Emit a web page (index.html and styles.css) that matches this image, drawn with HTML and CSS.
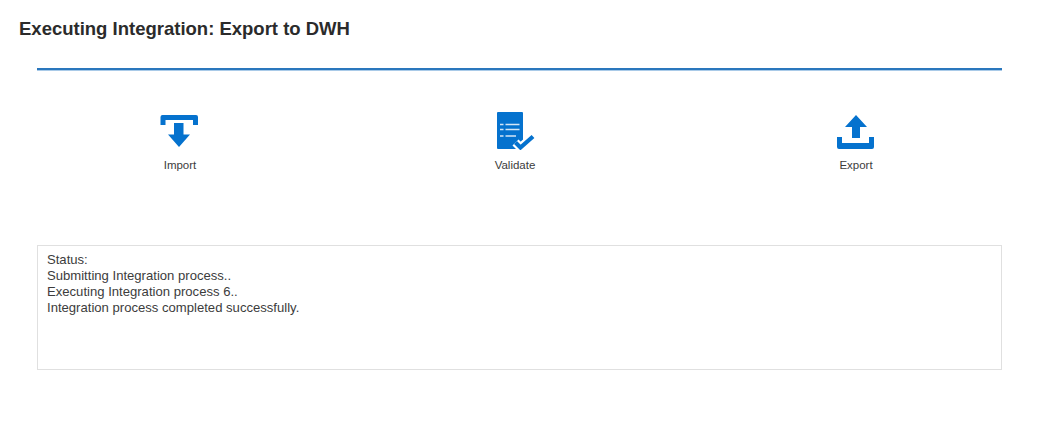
FILE: index.html
```html
<!DOCTYPE html>
<html lang="en">
<head>
<meta charset="utf-8">
<title>Executing Integration</title>
<link rel="stylesheet" href="styles.css">
</head>
<body>
<h1 class="title">Executing Integration: Export to DWH</h1>
<main class="content">
  <div class="steps">
    <div class="step step-import">
      <svg class="icon" width="40" height="38" viewBox="0 0 40 38" aria-hidden="true">
        <path fill="#0572ce" d="M0.500 5a2 2 0 0 1 2-2h33.500a2 2 0 0 1 2 2v8h-5v-5h-27.500v5h-5z"/>
        <path fill="#0572ce" d="M14 11h9.500v11.500h6.500l-11 12.500-11-12.500h6z"/>
      </svg>
      <span class="label">Import</span>
    </div>
    <div class="step step-validate">
      <svg class="icon" width="40" height="38" viewBox="0 0 40 38" aria-hidden="true">
        <rect fill="#0572ce" x="2" y="0" width="26" height="37" rx="1"/>
        <path fill="none" stroke="#fff" stroke-width="8.500" d="M20.500 30.500l5 5 12.500-11"/>
        <path fill="none" stroke="#0572ce" stroke-width="4.200" d="M20.500 30.500l5 5 12.500-11"/>
        <path stroke="#d5e6f6" stroke-width="1.300" d="M5 12.500h3.500M10.500 12.500h14M5 17.500h3.500M10.500 17.500h14M5 24h3.500M10.500 24h10.500"/>
      </svg>
      <span class="label">Validate</span>
    </div>
    <div class="step step-export">
      <svg class="icon" width="40" height="38" viewBox="0 0 40 38" aria-hidden="true">
        <path fill="#0572ce" d="M20 3l11 12h-7v11h-8v-11h-7z"/>
        <path fill="#0572ce" d="M1 25h5v6h27v-6h5v10a2 2 0 0 1-2 2h-33a2 2 0 0 1-2-2z"/>
      </svg>
      <span class="label">Export</span>
    </div>
  </div>
  <div class="status">
    <div>Status:</div>
    <div>Submitting Integration process..</div>
    <div>Executing Integration process 6..</div>
    <div>Integration process completed successfully.</div>
  </div>
</main>
</body>
</html>
```
FILE: styles.css
```css
html, body {
  margin: 0;
  padding: 0;
  background: #fff;
  font-family: "Liberation Sans", Arial, sans-serif;
  color: #333;
}
.title {
  margin: 0;
  padding: 18px 0 0 19px;
  font-size: 18.5px;
  line-height: 21px;
  font-weight: bold;
  color: #2b2b2b;
}
.content {
  width: 965px;
  margin: 29px 0 0 37px;
  border-top: 2px solid #2a77bd;
}
.steps {
  display: flex;
  padding-top: 42px;
  height: 133px;
  box-sizing: content-box;
  box-shadow: inset 0 1px 0 #a9cae8;
}
.step {
  width: 80px;
  display: flex;
  flex-direction: column;
  align-items: center;
}
.step-import { margin-left: 103px; }
.step-validate { margin-left: 255px; }
.step-export { margin-left: 261px; }
.icon { display: block; }
.label {
  margin-top: 8px;
  font-size: 11.500px;
  line-height: 14px;
  color: #3c3c3c;
}
.status {
  box-sizing: border-box;
  height: 125px;
  border: 1px solid #e0e0e0;
  padding: 6px 9px;
  font-size: 13.100px;
  line-height: 16px;
  color: #3c3c3c;
}
```
